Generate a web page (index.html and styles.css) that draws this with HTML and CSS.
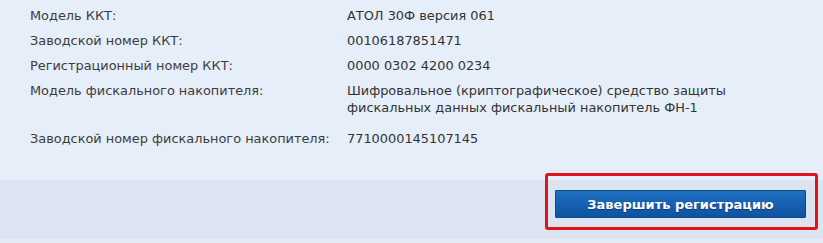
FILE: index.html
```html
<!DOCTYPE html>
<html lang="ru">
<head>
<meta charset="utf-8">
<link rel="stylesheet" href="styles.css">
</head>
<body>
<div class="page">
  <section class="info">
    <div class="rows">
      <div class="label">Модель ККТ:</div>
      <div class="value">АТОЛ 30Ф версия 061</div>
      <div class="label">Заводской номер ККТ:</div>
      <div class="value">00106187851471</div>
      <div class="label">Регистрационный номер ККТ:</div>
      <div class="value">0000 0302 4200 0234</div>
      <div class="label">Модель фискального накопителя:</div>
      <div class="value value-wide">Шифровальное (криптографическое) средство защиты<br>фискальных данных фискальный накопитель ФН-1</div>
      <div class="label">Заводской номер фискального накопителя:</div>
      <div class="value">7710000145107145</div>
    </div>
  </section>
  <footer class="actions">
    <div class="btn-wrap">
      <button class="btn">Завершить регистрацию</button>
      <span class="highlight"></span>
    </div>
  </footer>
</div>
</body>
</html>
```

FILE: styles.css
```css
html, body {
  margin: 0;
  padding: 0;
}
body {
  width: 823px;
  height: 243px;
  overflow: hidden;
  background: #dfe6f2;
  font-family: "DejaVu Sans", Verdana, sans-serif;
  font-size: 12.9px;
  color: #333;
}
.page {
  display: flex;
  flex-direction: column;
  height: 243px;
}
.info {
  background: #e6eefa;
  height: 180px;
  box-sizing: border-box;
  padding: 7px 0 0 30px;
}
.rows {
  display: grid;
  grid-template-columns: 317px auto;
  row-gap: 8px;
  line-height: 17px;
}
.label {
  color: #3c3c3c;
}
.value {
  color: #333;
}
.value-wide {
  padding-bottom: 6px;
}
.actions {
  flex: 1;
  background: #dde4f1;
  border-bottom: 4px solid #e4eaf6;
  display: flex;
  justify-content: flex-end;
  padding: 10px 17px 0 0;
}
.btn-wrap {
  position: relative;
  height: 28px;
}
.btn {
  width: 251px;
  height: 28px;
  border: 1px solid #0b4a92;
  border-radius: 1px;
  background: linear-gradient(#1e6fc2, #0f539f);
  color: #fff;
  font-family: "DejaVu Sans", Verdana, sans-serif;
  font-size: 13px;
  font-weight: bold;
  text-shadow: 0 1px 1px rgba(0,0,0,0.35);
  padding: 0;
}
.highlight {
  position: absolute;
  left: -10px;
  top: -17px;
  right: -12px;
  bottom: -12px;
  border: 3px solid #e0141b;
  border-radius: 3px;
}
```
